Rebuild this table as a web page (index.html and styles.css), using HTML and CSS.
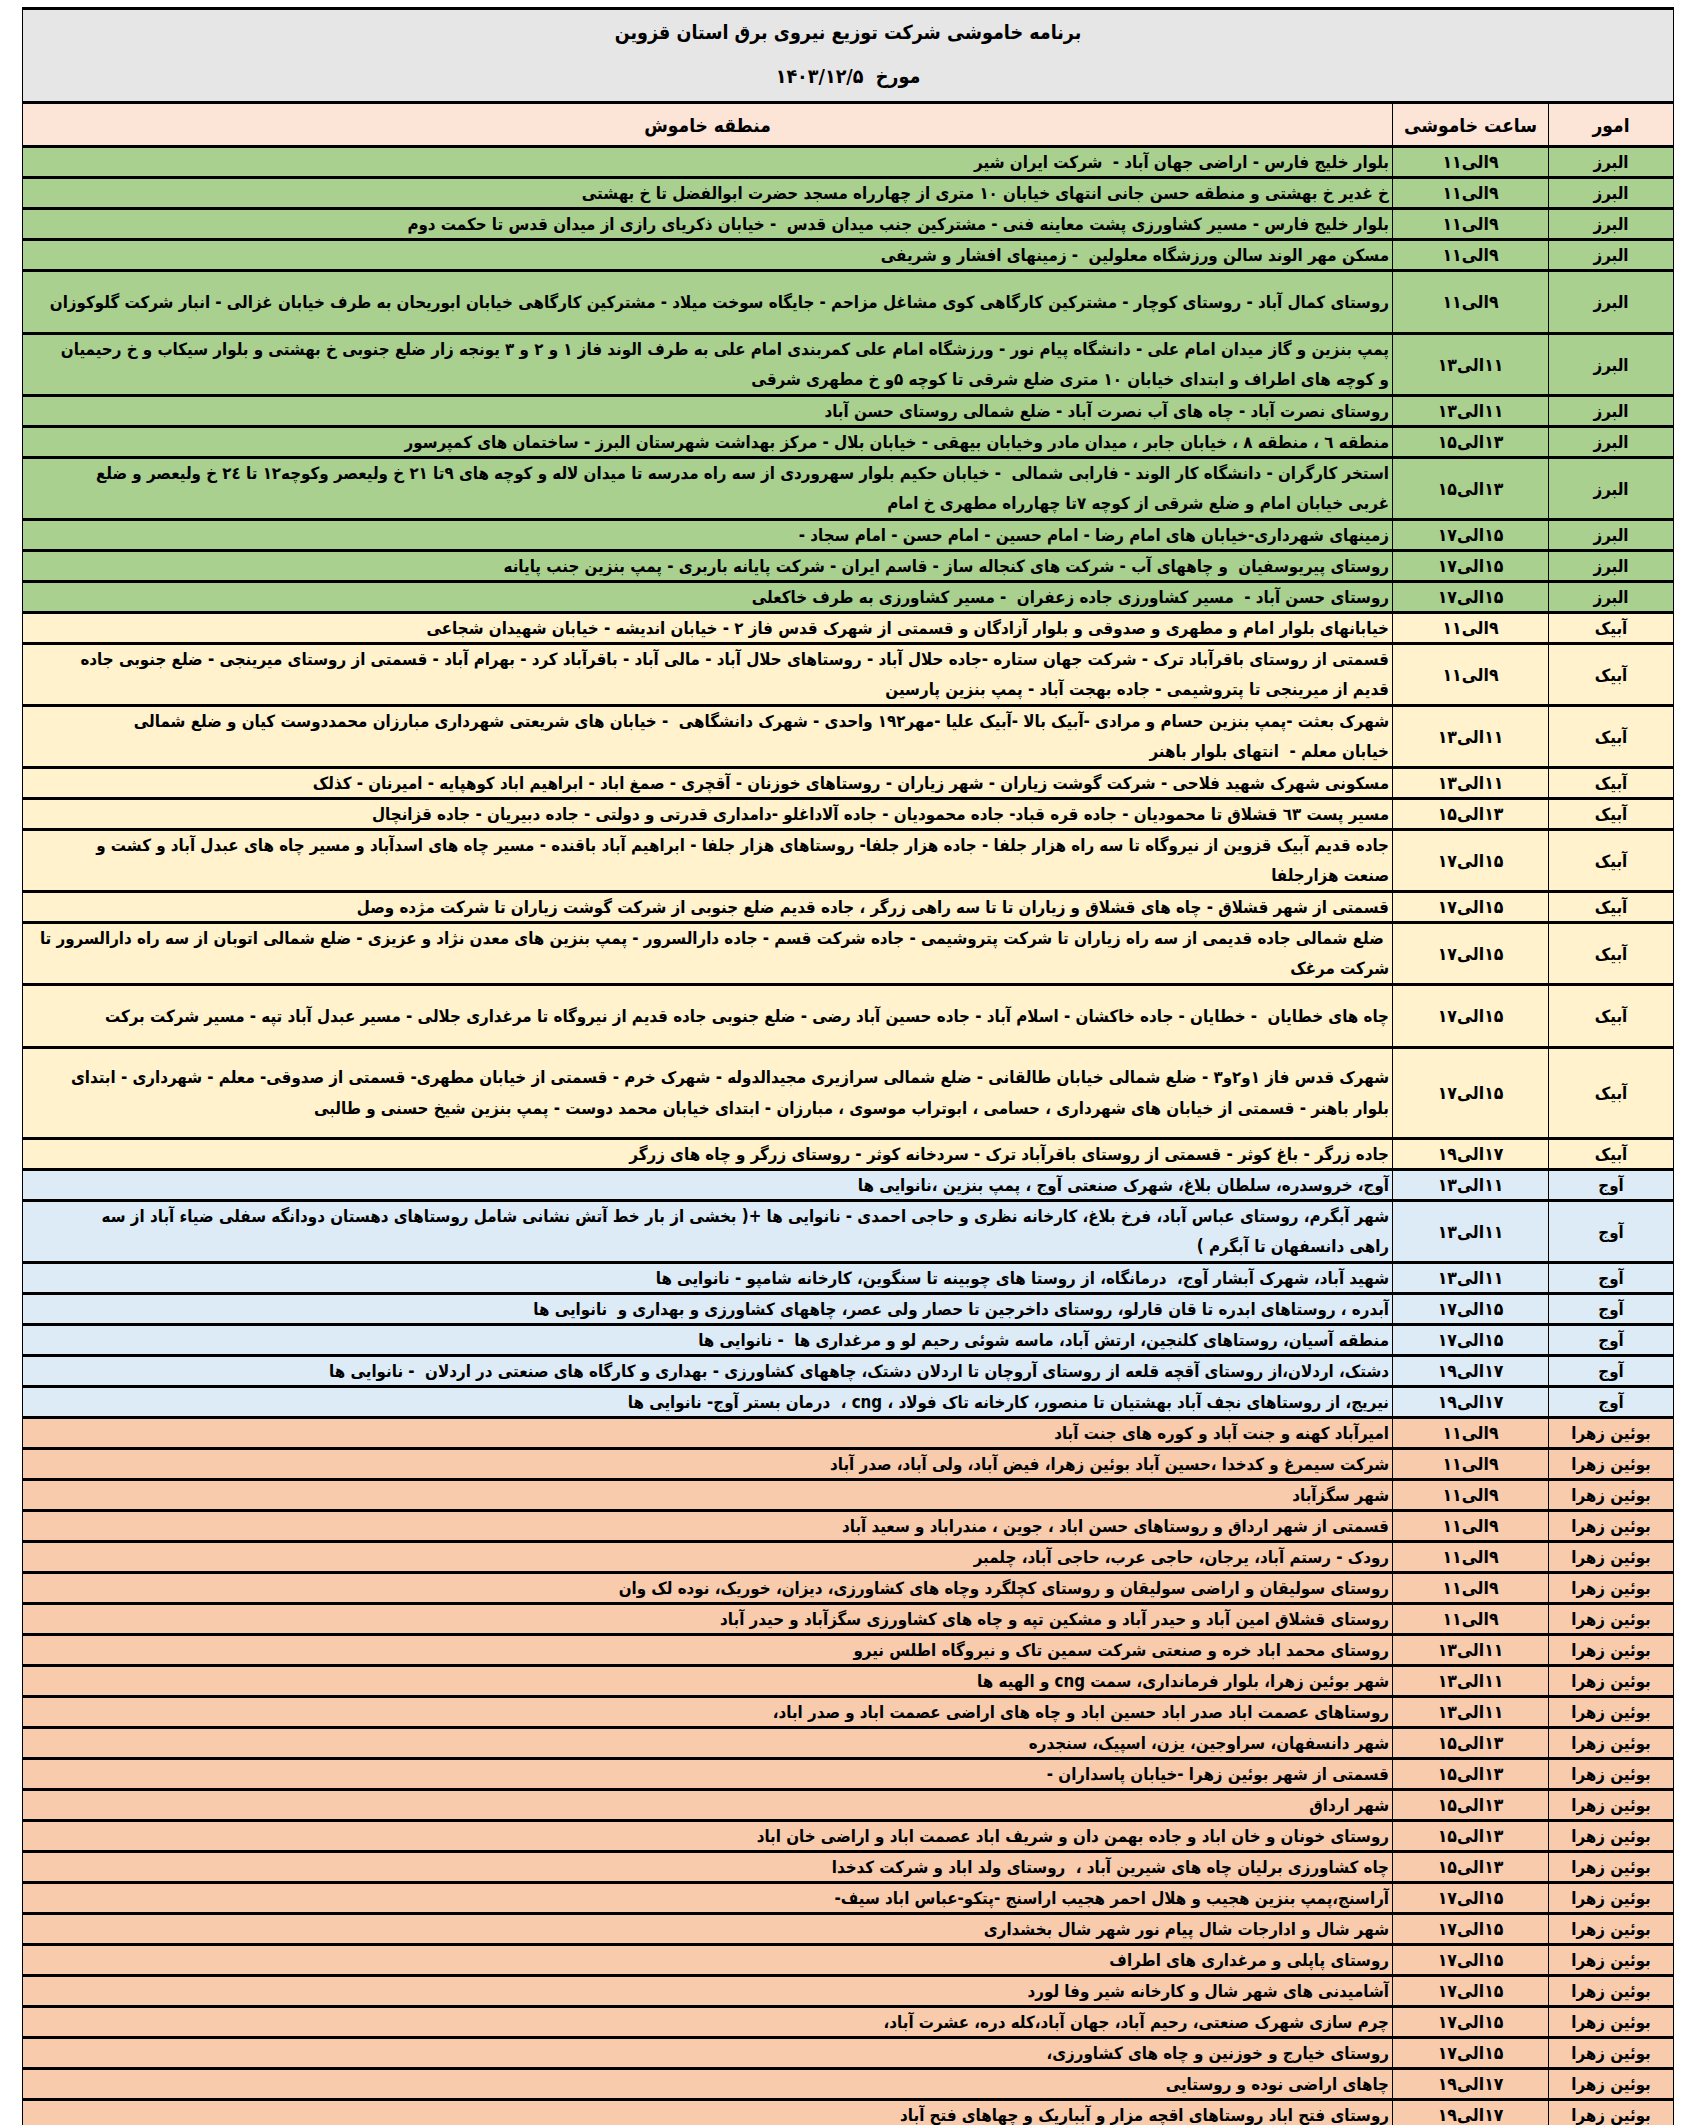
FILE: index.html
```html
<!DOCTYPE html>
<html lang="fa" dir="rtl">
<head>
<meta charset="utf-8">
<title>برنامه خاموشی</title>
<link rel="stylesheet" href="styles.css">
</head>
<body>
<div class="sheet">
  <div class="titlebox">
    <div class="title">برنامه خاموشی شرکت توزیع نیروی برق استان قزوین</div>
    <div class="date">مورخ&nbsp;&nbsp;۱۴۰۳/۱۲/۵</div>
  </div>
  <div class="row head"><div class="amor">امور</div><div class="time">ساعت خاموشی</div><div class="area ctr">منطقه خاموش</div></div>

  <div class="row g"><div class="amor">البرز</div><div class="time">۹الی۱۱</div><div class="area">بلوار خلیج فارس - اراضی جهان آباد -&nbsp; شرکت ایران شیر</div></div>
  <div class="row g"><div class="amor">البرز</div><div class="time">۹الی۱۱</div><div class="area">خ غدیر خ بهشتی و منطقه حسن جانی انتهای خیابان ۱۰ متری از چهارراه مسجد حضرت ابوالفضل تا خ بهشتی</div></div>
  <div class="row g"><div class="amor">البرز</div><div class="time">۹الی۱۱</div><div class="area">بلوار خلیج فارس - مسیر کشاورزی پشت معاینه فنی - مشترکین جنب میدان قدس&nbsp; - خیابان ذکریای رازی از میدان قدس تا حکمت دوم</div></div>
  <div class="row g"><div class="amor">البرز</div><div class="time">۹الی۱۱</div><div class="area">مسکن مهر الوند سالن ورزشگاه معلولین&nbsp; - زمینهای افشار و شریفی</div></div>
  <div class="row g tall"><div class="amor">البرز</div><div class="time">۹الی۱۱</div><div class="area">روستای کمال آباد - روستای کوچار - مشترکین کارگاهی کوی مشاغل مزاحم - جایگاه سوخت میلاد - مشترکین کارگاهی خیابان ابوریحان به طرف خیابان غزالی - انبار شرکت گلوکوزان</div></div>
  <div class="row g two"><div class="amor">البرز</div><div class="time">۱۱الی۱۳</div><div class="area">پمپ بنزین و گاز میدان امام علی - دانشگاه پیام نور - ورزشگاه امام علی کمربندی امام علی به طرف الوند فاز ۱ و ۲ و ۳ یونجه زار ضلع جنوبی خ بهشتی و بلوار سیکاب و خ رحیمیان<br>و کوچه های اطراف و ابتدای خیابان ۱۰ متری ضلع شرقی تا کوچه ۵و خ مطهری شرقی</div></div>
  <div class="row g"><div class="amor">البرز</div><div class="time">۱۱الی۱۳</div><div class="area">روستای نصرت آباد - چاه های آب نصرت آباد - ضلع شمالی روستای حسن آباد</div></div>
  <div class="row g"><div class="amor">البرز</div><div class="time">۱۳الی۱۵</div><div class="area">منطقه ٦ ، منطقه ۸ ، خیابان جابر ، میدان مادر وخیابان بیهقی - خیابان بلال - مرکز بهداشت شهرستان البرز - ساختمان های کمپرسور</div></div>
  <div class="row g two"><div class="amor">البرز</div><div class="time">۱۳الی۱۵</div><div class="area">استخر کارگران - دانشگاه کار الوند - فارابی شمالی&nbsp; - خیابان حکیم بلوار سهروردی از سه راه مدرسه تا میدان لاله و کوچه های ۹تا ۲۱ خ ولیعصر وکوچه۱۲ تا ۲٤ خ ولیعصر و ضلع<br>غربی خیابان امام و ضلع شرقی از کوچه ۷تا چهارراه مطهری خ امام</div></div>
  <div class="row g"><div class="amor">البرز</div><div class="time">۱۵الی۱۷</div><div class="area">زمینهای شهرداری-خیابان های امام رضا - امام حسین - امام حسن - امام سجاد -</div></div>
  <div class="row g"><div class="amor">البرز</div><div class="time">۱۵الی۱۷</div><div class="area">روستای پیریوسفیان&nbsp; و چاههای آب - شرکت های کنجاله ساز - قاسم ایران - شرکت پایانه باربری - پمپ بنزین جنب پایانه</div></div>
  <div class="row g"><div class="amor">البرز</div><div class="time">۱۵الی۱۷</div><div class="area">روستای حسن آباد -&nbsp; مسیر کشاورزی جاده زعفران&nbsp; - مسیر کشاورزی به طرف خاکعلی</div></div>

  <div class="row y"><div class="amor">آبیک</div><div class="time">۹الی۱۱</div><div class="area">خیابانهای بلوار امام و مطهری و صدوقی و بلوار آزادگان و قسمتی از شهرک قدس فاز ۲ - خیابان اندیشه - خیابان شهیدان شجاعی</div></div>
  <div class="row y two"><div class="amor">آبیک</div><div class="time">۹الی۱۱</div><div class="area">قسمتی از روستای باقرآباد ترک - شرکت جهان ستاره -جاده حلال آباد - روستاهای حلال آباد - مالی آباد - باقرآباد کرد - بهرام آباد - قسمتی از روستای میرینجی - ضلع جنوبی جاده<br>قدیم از میرینجی تا پتروشیمی - جاده بهجت آباد - پمپ بنزین پارسین</div></div>
  <div class="row y two"><div class="amor">آبیک</div><div class="time">۱۱الی۱۳</div><div class="area">شهرک بعثت -پمپ بنزین حسام و مرادی -آبیک بالا -آبیک علیا -مهر۱۹۲ واحدی - شهرک دانشگاهی&nbsp; - خیابان های شریعتی شهرداری مبارزان محمددوست کیان و ضلع شمالی<br>خیابان معلم -&nbsp; انتهای بلوار باهنر</div></div>
  <div class="row y"><div class="amor">آبیک</div><div class="time">۱۱الی۱۳</div><div class="area">مسکونی شهرک شهید فلاحی - شرکت گوشت زیاران - شهر زیاران - روستاهای خوزنان - آقچری - صمغ اباد - ابراهیم اباد کوهپایه - امیرنان - کذلک</div></div>
  <div class="row y"><div class="amor">آبیک</div><div class="time">۱۳الی۱۵</div><div class="area">مسیر پست ٦۳ قشلاق تا محمودیان - جاده قره قباد- جاده محمودیان - جاده آلاداغلو -دامداری قدرتی و دولتی - جاده دبیریان - جاده قزانچال</div></div>
  <div class="row y two"><div class="amor">آبیک</div><div class="time">۱۵الی۱۷</div><div class="area">جاده قدیم آبیک قزوین از نیروگاه تا سه راه هزار جلفا - جاده هزار جلفا- روستاهای هزار جلفا - ابراهیم آباد باقنده - مسیر چاه های اسدآباد و مسیر چاه های عبدل آباد و کشت و<br>صنعت هزارجلفا</div></div>
  <div class="row y"><div class="amor">آبیک</div><div class="time">۱۵الی۱۷</div><div class="area">قسمتی از شهر قشلاق - چاه های قشلاق و زیاران تا تا سه راهی زرگر ، جاده قدیم ضلع جنوبی از شرکت گوشت زیاران تا شرکت مژده وصل</div></div>
  <div class="row y two"><div class="amor">آبیک</div><div class="time">۱۵الی۱۷</div><div class="area">&nbsp;ضلع شمالی جاده قدیمی از سه راه زیاران تا شرکت پتروشیمی - جاده شرکت قسم - جاده دارالسرور - پمپ بنزین های معدن نژاد و عزیزی - ضلع شمالی اتوبان از سه راه دارالسرور تا<br>شرکت مرغک</div></div>
  <div class="row y tall"><div class="amor">آبیک</div><div class="time">۱۵الی۱۷</div><div class="area">چاه های خطایان&nbsp; - خطایان - جاده خاکشان - اسلام آباد - جاده حسین آباد رضی - ضلع جنوبی جاده قدیم از نیروگاه تا مرغداری جلالی - مسیر عبدل آباد تپه - مسیر شرکت برکت</div></div>
  <div class="row y three"><div class="amor">آبیک</div><div class="time">۱۵الی۱۷</div><div class="area">شهرک قدس فاز ۱و۲و۳ - ضلع شمالی خیابان طالقانی - ضلع شمالی سرازیری مجیدالدوله - شهرک خرم - قسمتی از خیابان مطهری- قسمتی از صدوقی- معلم - شهرداری - ابتدای<br>بلوار باهنر - قسمتی از خیابان های شهرداری ، حسامی ، ابوتراب موسوی ، مبارزان - ابتدای خیابان محمد دوست - پمپ بنزین شیخ حسنی و طالبی</div></div>
  <div class="row y"><div class="amor">آبیک</div><div class="time">۱۷الی۱۹</div><div class="area">جاده زرگر - باغ کوثر - قسمتی از روستای باقرآباد ترک - سردخانه کوثر - روستای زرگر و چاه های زرگر</div></div>

  <div class="row b"><div class="amor">آوج</div><div class="time">۱۱الی۱۳</div><div class="area">آوج، خروسدره، سلطان بلاغ، شهرک صنعتی آوج ، پمپ بنزین ،نانوایی ها</div></div>
  <div class="row b two"><div class="amor">آوج</div><div class="time">۱۱الی۱۳</div><div class="area">شهر آبگرم، روستای عباس آباد، فرخ بلاغ، کارخانه نظری و حاجی احمدی - نانوایی ها +( بخشی از بار خط آتش نشانی شامل روستاهای دهستان دودانگه سفلی ضیاء آباد از سه<br>راهی دانسفهان تا آبگرم )</div></div>
  <div class="row b"><div class="amor">آوج</div><div class="time">۱۱الی۱۳</div><div class="area">شهید آباد، شهرک آبشار آوج،&nbsp; درمانگاه، از روستا های چوبینه تا سنگوین، کارخانه شامپو - نانوایی ها</div></div>
  <div class="row b"><div class="amor">آوج</div><div class="time">۱۵الی۱۷</div><div class="area">آبدره ، روستاهای ابدره تا قان قارلو، روستای داخرجین تا حصار ولی عصر، چاههای کشاورزی و بهداری و&nbsp; نانوایی ها</div></div>
  <div class="row b"><div class="amor">آوج</div><div class="time">۱۵الی۱۷</div><div class="area">منطقه آسیان، روستاهای کلنجین، ارتش آباد، ماسه شوئی رحیم لو و مرغداری ها&nbsp; - نانوایی ها</div></div>
  <div class="row b"><div class="amor">آوج</div><div class="time">۱۷الی۱۹</div><div class="area">دشتک، اردلان،از روستای آقچه قلعه از روستای آروچان تا اردلان دشتک، چاههای کشاورزی - بهداری و کارگاه های صنعتی در اردلان&nbsp; - نانوایی ها</div></div>
  <div class="row b"><div class="amor">آوج</div><div class="time">۱۷الی۱۹</div><div class="area">نیریج، از روستاهای نجف آباد بهشتیان تا منصور، کارخانه تاک فولاد ، cng ،&nbsp; درمان بستر آوج- نانوایی ها</div></div>

  <div class="row o"><div class="amor">بوئین زهرا</div><div class="time">۹الی۱۱</div><div class="area">امیرآباد کهنه و جنت آباد و کوره های جنت آباد</div></div>
  <div class="row o"><div class="amor">بوئین زهرا</div><div class="time">۹الی۱۱</div><div class="area">شرکت سیمرغ و کدخدا ،حسین آباد بوئین زهرا، فیض آباد، ولی آباد، صدر آباد</div></div>
  <div class="row o"><div class="amor">بوئین زهرا</div><div class="time">۹الی۱۱</div><div class="area">شهر سگزآباد</div></div>
  <div class="row o"><div class="amor">بوئین زهرا</div><div class="time">۹الی۱۱</div><div class="area">قسمتی از شهر ارداق و روستاهای حسن اباد ، جوین ، مندراباد و سعید آباد</div></div>
  <div class="row o"><div class="amor">بوئین زهرا</div><div class="time">۹الی۱۱</div><div class="area">رودک - رستم آباد، یرجان، حاجی عرب، حاجی آباد، چلمبر</div></div>
  <div class="row o"><div class="amor">بوئین زهرا</div><div class="time">۹الی۱۱</div><div class="area">روستای سولیقان و اراضی سولیقان و روستای کچلگرد وچاه های کشاورزی، دیزان، خوریک، نوده لک وان</div></div>
  <div class="row o"><div class="amor">بوئین زهرا</div><div class="time">۹الی۱۱</div><div class="area">روستای قشلاق امین آباد و حیدر آباد و مشکین تپه و چاه های کشاورزی سگزآباد و حیدر آباد</div></div>
  <div class="row o"><div class="amor">بوئین زهرا</div><div class="time">۱۱الی۱۳</div><div class="area">روستای محمد اباد خره و صنعتی شرکت سمین تاک و نیروگاه اطلس نیرو</div></div>
  <div class="row o"><div class="amor">بوئین زهرا</div><div class="time">۱۱الی۱۳</div><div class="area">شهر بوئین زهرا، بلوار فرمانداری، سمت cng و الهیه ها</div></div>
  <div class="row o"><div class="amor">بوئین زهرا</div><div class="time">۱۱الی۱۳</div><div class="area">روستاهای عصمت اباد صدر اباد حسین اباد و چاه های اراضی عصمت اباد و صدر اباد،</div></div>
  <div class="row o"><div class="amor">بوئین زهرا</div><div class="time">۱۳الی۱۵</div><div class="area">شهر دانسفهان، سراوجین، یزن، اسپیک، سنجدره</div></div>
  <div class="row o"><div class="amor">بوئین زهرا</div><div class="time">۱۳الی۱۵</div><div class="area">قسمتی از شهر بوئین زهرا -خیابان پاسداران -</div></div>
  <div class="row o"><div class="amor">بوئین زهرا</div><div class="time">۱۳الی۱۵</div><div class="area">شهر ارداق</div></div>
  <div class="row o"><div class="amor">بوئین زهرا</div><div class="time">۱۳الی۱۵</div><div class="area">روستای خونان و خان اباد و جاده بهمن دان و شریف اباد عصمت اباد و اراضی خان اباد</div></div>
  <div class="row o"><div class="amor">بوئین زهرا</div><div class="time">۱۳الی۱۵</div><div class="area">چاه کشاورزی برلیان چاه های شیرین آباد ،&nbsp; روستای ولد اباد و شرکت کدخدا</div></div>
  <div class="row o"><div class="amor">بوئین زهرا</div><div class="time">۱۵الی۱۷</div><div class="area">آراسنج،پمپ بنزین هجیب و هلال احمر هجیب اراسنج -پتکو-عباس اباد سیف-</div></div>
  <div class="row o"><div class="amor">بوئین زهرا</div><div class="time">۱۵الی۱۷</div><div class="area">شهر شال و ادارجات شال پیام نور شهر شال بخشداری</div></div>
  <div class="row o"><div class="amor">بوئین زهرا</div><div class="time">۱۵الی۱۷</div><div class="area">روستای پاپلی و مرغداری های اطراف</div></div>
  <div class="row o"><div class="amor">بوئین زهرا</div><div class="time">۱۵الی۱۷</div><div class="area">آشامیدنی های شهر شال و کارخانه شیر وفا لورد</div></div>
  <div class="row o"><div class="amor">بوئین زهرا</div><div class="time">۱۵الی۱۷</div><div class="area">چرم سازی شهرک صنعتی، رحیم آباد، جهان آباد،کله دره، عشرت آباد،</div></div>
  <div class="row o"><div class="amor">بوئین زهرا</div><div class="time">۱۵الی۱۷</div><div class="area">روستای خیارج و خوزنین و چاه های کشاورزی،</div></div>
  <div class="row o"><div class="amor">بوئین زهرا</div><div class="time">۱۷الی۱۹</div><div class="area">چاهای اراضی نوده و روستایی</div></div>
  <div class="row o"><div class="amor">بوئین زهرا</div><div class="time">۱۷الی۱۹</div><div class="area">روستای فتح اباد روستاهای اقچه مزار و آبباریک و چهاهای فتح آباد</div></div>
</div>
</body>
</html>
```

FILE: styles.css
```css
html, body {
  margin: 0;
  padding: 0;
  background: #ffffff;
}

body {
  padding: 7px 26px 0 22px;
  font-family: "DejaVu Sans Condensed", "DejaVu Sans", sans-serif;
  font-weight: bold;
  color: #000;
}

.sheet {
  width: 1652px;
  box-sizing: border-box;
  border-left: 1px solid #000;
  border-right: 1px solid #000;
  border-top: 3px solid #000;
}

.titlebox {
  background: #e7e6e6;
  height: 91px;
  box-sizing: border-box;
  padding-top: 3px;
  text-align: center;
}

.title {
  font-size: 19.5px;
  line-height: 40px;
}

.date {
  font-size: 19.5px;
  line-height: 40px;
  margin-top: 4px;
}

.row {
  display: grid;
  grid-template-columns: 124px 156px 1fr;
  height: 31px;
  box-sizing: border-box;
  border-top: 3px solid #000;
  font-size: 16.8px;
}

.row > div {
  display: flex;
  align-items: center;
  white-space: nowrap;
  min-width: 0;
}

.amor, .time {
  justify-content: center;
}

.time {
  font-size: 17.5px;
}

.time, .area {
  border-right: 1px solid #000;
}

.area {
  justify-content: flex-start;
  padding-right: 3px;
  line-height: 28px;
}

.area.ctr {
  justify-content: center;
  padding-right: 0;
}

.head {
  height: 44px;
  background: #fce4d6;
  font-size: 19px;
}

.head .time {
  font-size: 19px;
}

.two { height: 62px; }
.two .area { line-height: 29.5px; }
.tall { height: 63px; }
.three { height: 91px; }
.three .area { line-height: 31px; }

.g { background: #a9d08e; }
.y { background: #fff2cc; }
.b { background: #ddebf7; }
.o { background: #f8cbad; }
```
